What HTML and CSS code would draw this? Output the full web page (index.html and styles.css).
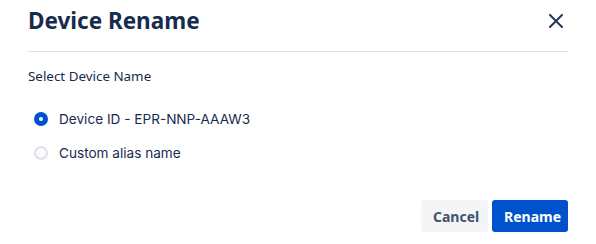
FILE: index.html
```html
<!DOCTYPE html>
<html>
<head>
<meta charset="utf-8">
<link rel="stylesheet" href="styles.css">
</head>
<body>
<div class="modal">
  <div class="header">
    <h1 class="title">Device Rename</h1>
    <button class="close" aria-label="Close">
      <svg width="14" height="14" viewBox="0 0 14 14"><path d="M1 1 L13 13 M13 1 L1 13" stroke="#253858" stroke-width="2" stroke-linecap="square"/></svg>
    </button>
  </div>
  <div class="body">
    <div class="label">Select Device Name</div>
    <div class="options">
      <label class="option"><span class="radio checked"></span><span class="opt-text">Device ID - EPR-NNP-AAAW3</span></label>
      <label class="option"><span class="radio"></span><span class="opt-text">Custom alias name</span></label>
    </div>
  </div>
  <div class="footer">
    <button class="btn btn-subtle">Cancel</button>
    <button class="btn btn-primary">Rename</button>
  </div>
</div>
</body>
</html>
```
FILE: styles.css
```css
html, body { margin: 0; padding: 0; background: #fff; }
body { font-family: "Noto Sans", "Liberation Sans", sans-serif; color: #172B4D; }
.modal { width: 596px; height: 244px; box-sizing: border-box; padding: 0 28px; display: flex; flex-direction: column; }
.header { display: flex; align-items: center; justify-content: space-between; height: 52px; border-bottom: 1px solid #DFE1E6; box-sizing: border-box; }
.title { margin: 0; font-size: 22.5px; font-weight: 700; color: #172B4D; line-height: 28px; padding-bottom: 10px; }
.close { border: 0; background: none; padding: 0; margin-right: 5px; width: 14px; height: 14px; display: flex; margin-bottom: 10px; }
.body { padding-top: 15px; }
.label { font-size: 13.4px; line-height: 18px; color: #172B4D; }
.options { margin-top: 24px; display: flex; flex-direction: column; gap: 14px; }
.option { display: flex; align-items: center; gap: 11px; font-family: "Inter", "Liberation Sans", sans-serif; font-size: 13.6px; line-height: 20px; color: #172B4D; padding-left: 6px; }
.radio { width: 14px; height: 14px; border-radius: 50%; box-sizing: border-box; border: 2px solid #DFE1E6; background: #FAFBFC; position: relative; }
.radio.checked { border-color: #0052CC; background: #0052CC; }
.radio.checked::after { content: ""; position: absolute; left: 3px; top: 3px; width: 4px; height: 4px; border-radius: 50%; background: #fff; }
.footer { margin-top: auto; margin-bottom: 12px; display: flex; justify-content: flex-end; gap: 4px; }
.btn { border: 0; border-radius: 3px; height: 32px; font-family: "Noto Sans", "Liberation Sans", sans-serif; font-size: 14px; font-weight: 700; padding: 0 12px; }
.btn-subtle { background: #F4F5F7; color: #42526E; width: 67px; }
.btn-primary { background: #0052CC; color: #fff; width: 76px; }
```
